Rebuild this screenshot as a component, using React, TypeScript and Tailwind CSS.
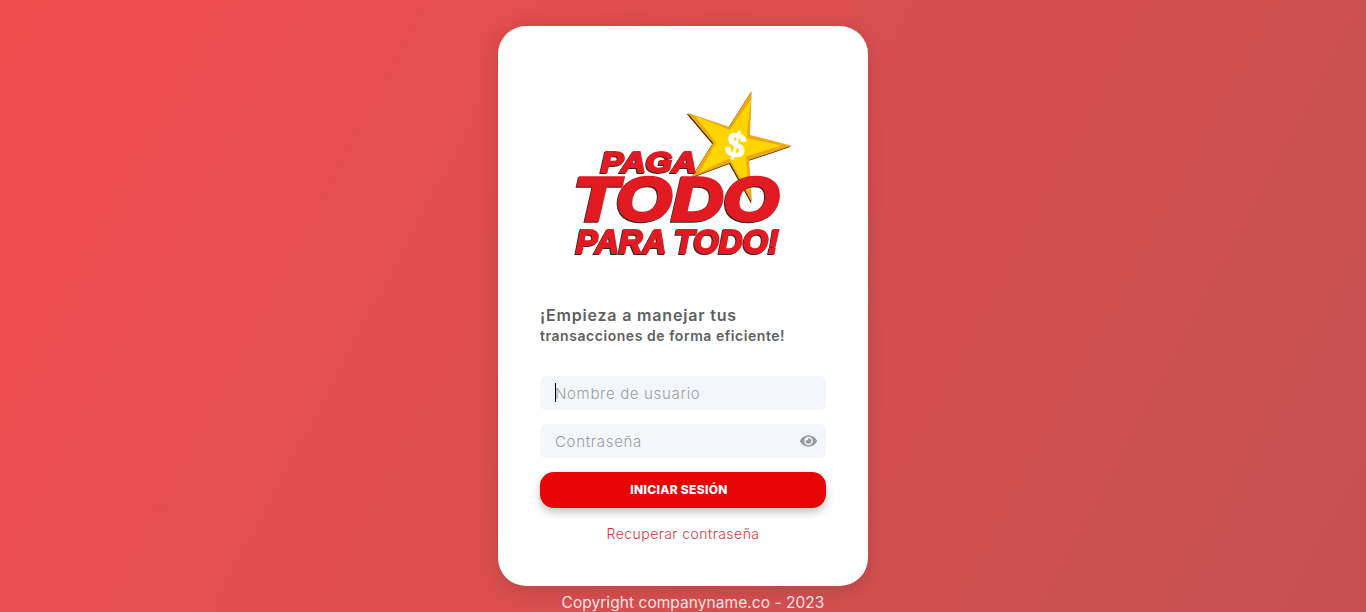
import React from 'react';
import { FaEye } from 'react-icons/fa';

const Logo = () => (
  <svg viewBox="0 0 260 190" className="w-[260px] h-[190px] block">
    {/* star */}
    <polygon
      points="201.7,11 200,55 241.7,65.7 199,80 202,122.7 180,83 141.7,97.3 163,63 137.3,32.7 179,46.7"
      fill="#3b2a10"
      transform="translate(-0.8,1)"
    />
    <polygon
      points="201.7,11 200,55 241.7,65.7 199,80 202,122.7 180,83 141.7,97.3 163,63 137.3,32.7 179,46.7"
      fill="#eda70f"
    />
    <polygon
      points="201,19 196.5,58 232,65.5 196,76.5 199,112 179,78.5 149,93 166,62.5 145,36 180,50"
      fill="#ffd500"
    />
    <text
      x="186"
      y="77"
      fontFamily="'Liberation Sans', sans-serif"
      fontWeight="700"
      fontSize="35"
      fill="#fff"
      stroke="#fff"
      strokeWidth="0.8"
      transform="rotate(14 186 65)"
      textAnchor="middle"
    >
      $
    </text>
    {/* lettering */}
    <g
      fontFamily="'Liberation Sans', sans-serif"
      fontWeight="700"
      fontStyle="italic"
      fill="#e21a22"
      stroke="#e21a22"
      strokeLinejoin="miter"
      className="drop-shadow-[-1px_1px_0_#2a2a2a]"
    >
      <text x="51" y="92" fontSize="29" strokeWidth="2" textLength="96" lengthAdjust="spacingAndGlyphs">
        PAGA
      </text>
      <text x="24" y="140" fontSize="62" strokeWidth="3.6" textLength="205" lengthAdjust="spacingAndGlyphs">
        TODO
      </text>
      <text x="26" y="173" fontSize="33" strokeWidth="2" textLength="203" lengthAdjust="spacingAndGlyphs">
        PARA TODO!
      </text>
    </g>
  </svg>
);

export default function App() {
  return (
    <div className="h-screen overflow-hidden flex flex-col items-center pt-[26px] bg-[linear-gradient(118deg,#f14d4d,#c45050)] font-['Inter','Open_Sans',sans-serif]">
      <div className="w-[370px] h-[560px] shrink-0 bg-white rounded-[28px] shadow-[0_4px_20px_rgba(0,0,0,0.15)] px-[42px] flex flex-col">
        {/* Logo */}
        <div className="ml-[10px] mt-[54px] h-[190px]">
          <Logo />
        </div>

        {/* Heading */}
        <h1 className="mt-[34px] text-[16px] leading-[22px] font-semibold tracking-[0.82px] text-[#5f5f5f]">
          ¡Empieza a manejar tus
        </h1>
        <p className="text-[14px] leading-[20px] font-semibold tracking-[0.55px] text-[#5f5f5f]">
          transacciones de forma eficiente!
        </p>

        {/* Form */}
        <div className="relative mt-[30px]">
          <input
            placeholder="Nombre de usuario"
            className="w-full h-[34px] block rounded-[6px] bg-[#f4f7f9] pl-[15px] text-[15px] tracking-[0.67px] font-light text-[#555] placeholder:text-[#9a9fa3] outline-none"
          />
          {/* text caret */}
          <span className="absolute left-[15px] top-[7px] w-px h-[19px] bg-black" />
        </div>
        <div className="relative mt-[14px]">
          <input
            type="password"
            placeholder="Contraseña"
            className="w-full h-[34px] block rounded-[6px] bg-[#f4f7f9] pl-[15px] pr-10 text-[15px] tracking-[0.67px] font-light text-[#555] placeholder:text-[#9a9fa3] outline-none"
          />
          <FaEye className="absolute right-[9px] top-1/2 -translate-y-1/2 w-[17px] h-[17px] text-[#9b9b9b]" />
        </div>

        <button className="mt-[14px] w-full h-[36px] shrink-0 rounded-[14px] bg-[#e80505] pr-[8px] text-white text-[12px] font-extrabold tracking-[0.3px] shadow-[0_4px_8px_rgba(0,0,0,0.25)]">
          INICIAR SESIÓN
        </button>

        <a className="mt-[17px] text-center text-[14px] leading-[18px] font-light tracking-[0.47px] text-[#d9363e]">
          Recuperar contraseña
        </a>
      </div>

      <footer className="pl-[20px] mt-[8px] text-[15.5px] leading-[18px] tracking-[0.05px] text-[#f5e4e4] whitespace-nowrap">
        Copyright companyname.co - 2023
      </footer>
    </div>
  );
}
